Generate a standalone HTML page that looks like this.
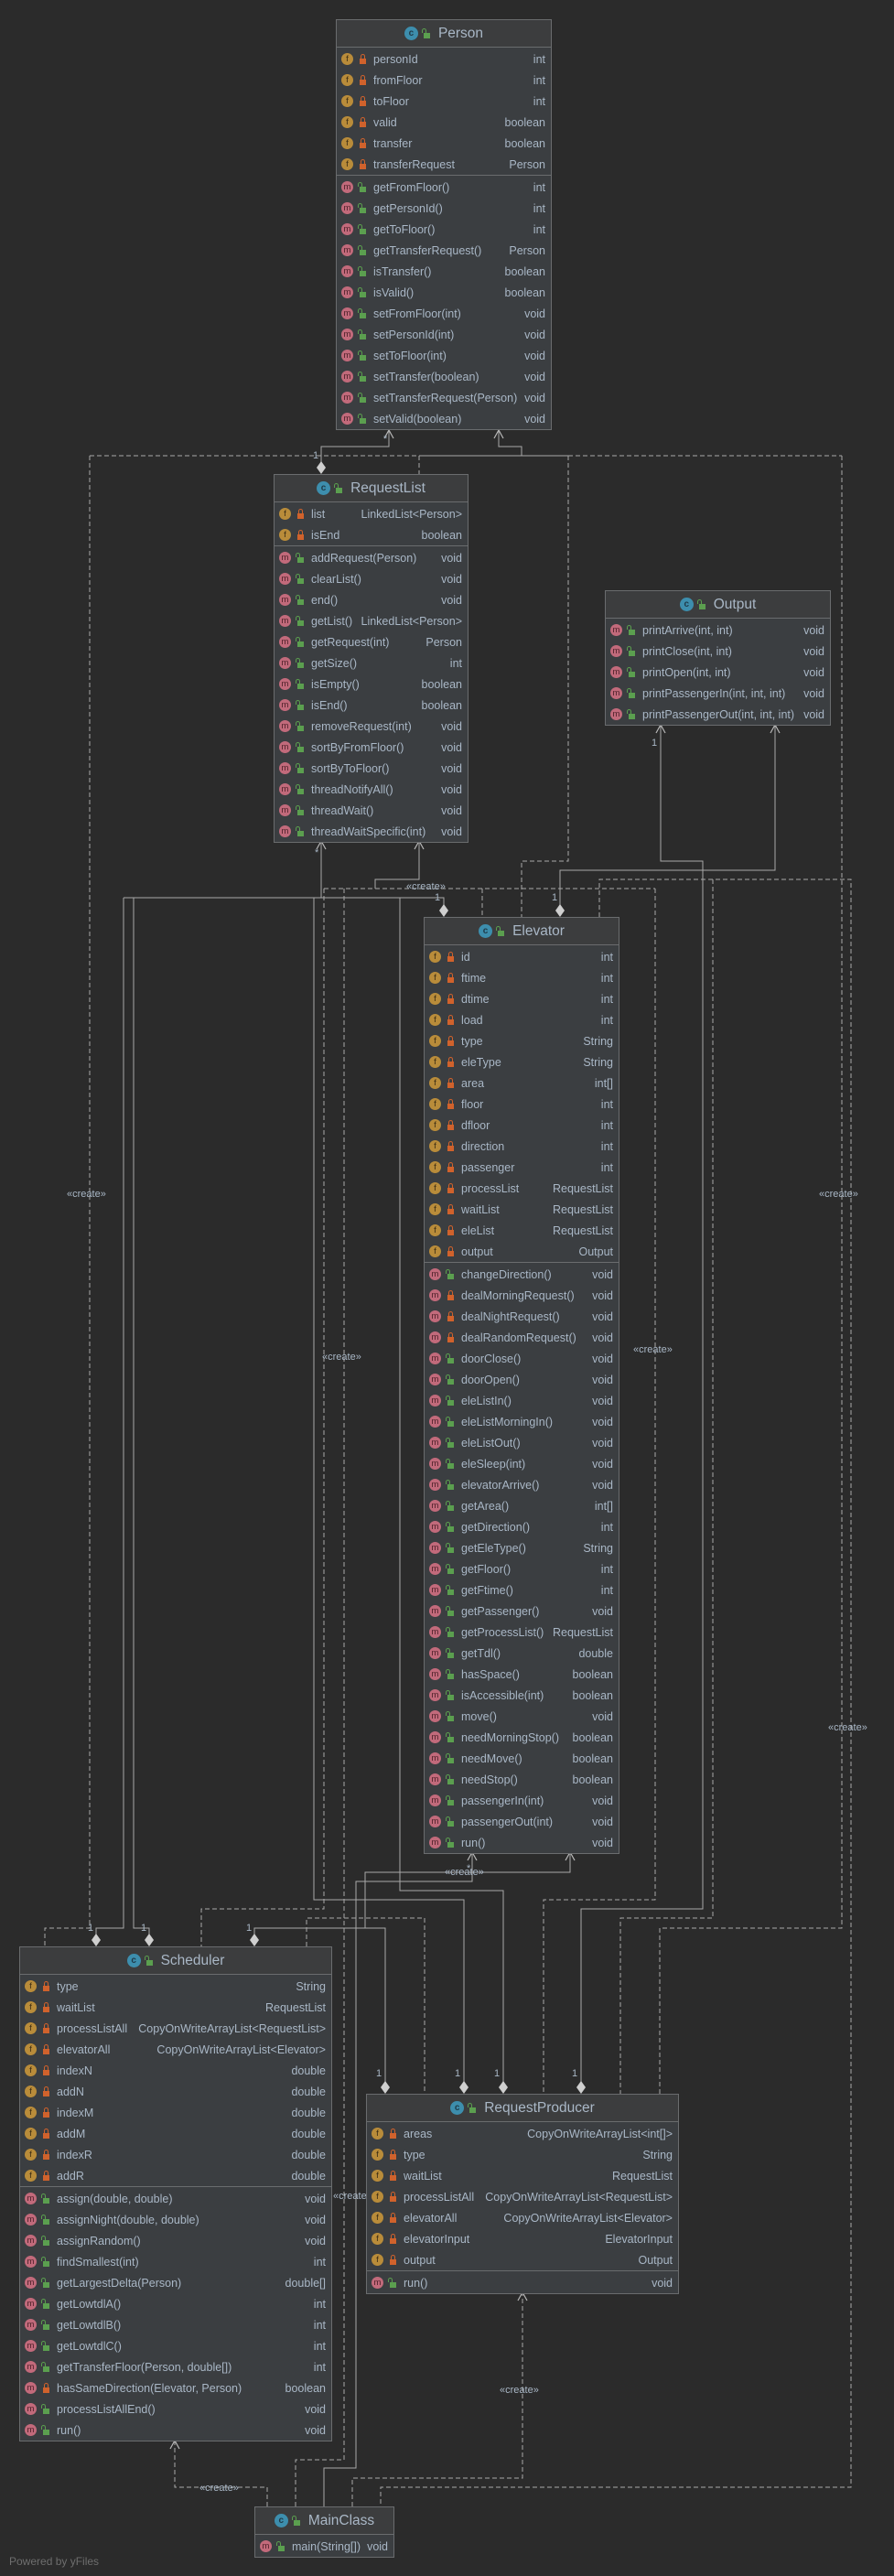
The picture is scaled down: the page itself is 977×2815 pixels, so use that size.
<!DOCTYPE html>
<html><head><meta charset="utf-8">
<style>
html,body{margin:0;padding:0;background:#2b2b2b;}
body{width:977px;height:2815px;position:relative;overflow:hidden;font-family:"Liberation Sans",sans-serif;}
svg.lines{position:absolute;left:0;top:0;}
.box{position:absolute;background:#3b3e41;border:1px solid #6a6c6e;box-sizing:border-box;font-size:12.5px;color:#a9b7c6;z-index:2;}
.hd{height:29px;border-bottom:1px solid #6a6c6e;display:flex;justify-content:center;align-items:center;font-size:15.5px;background:#3c3d3e;color:#a9b7c6;}
.hd .ci{width:15px;height:15px;border-radius:50%;background:#3d8ead;color:#1f3a48;font-size:10px;display:flex;align-items:center;justify-content:center;margin-right:6px;font-weight:bold;}
.sec{padding-top:1px;}
.sec.f{border-bottom:1px solid #6a6c6e;}
.r{height:23px;display:flex;align-items:center;padding-right:6px;white-space:nowrap;}
.ic{width:13px;height:13px;border-radius:50%;margin-left:5px;flex:none;display:flex;align-items:center;justify-content:center;font-size:9.5px;color:#3a2c14;}
.ic.fi{background:#b98c3a;}
.ic.mi{background:#c26a7b;color:#4a1e27;}
.lk{width:7px;height:6px;flex:none;margin-left:7px;margin-right:8px;position:relative;margin-top:4px;}
.lk::before{content:"";position:absolute;left:1px;top:-5px;width:3px;height:4px;border:1.5px solid;border-bottom:none;border-radius:3px 3px 0 0;}
.lk.p{background:#d0622c;}
.lk.p::before{border-color:#d0622c;}
.lk.g{background:#5b9f4f;}
.lk.g::before{border-color:#5b9f4f;left:-2px;}
.hd .lk{margin-left:0;margin-right:9px;margin-top:5px;}
.n{flex:1;}
.t{margin-left:6px;}
.lbl{position:absolute;font-size:11px;color:#a9b7c6;z-index:1;white-space:nowrap;}
.one{position:absolute;font-size:11px;color:#a9b7c6;}
</style></head><body>

<svg class="lines" width="977" height="2815" viewBox="0 0 977 2815">
<g fill="none" stroke="#a8a8a8" stroke-width="1">
<!-- solid lines -->
<polyline points="351,505 351,488 425,488 425,470"/>
<polyline points="545,470 545,488 570,488 570,498"/>
<line x1="458" y1="498" x2="621" y2="498"/>
<polyline points="351,919 351,981"/>
<polyline points="458,919 458,961 410,961 410,971"/>
<polyline points="135,981 485,981 485,989"/>
<polyline points="135,981 135,2107 105,2107 105,2114"/>
<polyline points="146,981 146,2107 163,2107 163,2114"/>
<polyline points="343,981 343,2076 507,2076 507,2275"/>
<polyline points="437,981 437,2066 550,2066 550,2275"/>
<polyline points="623,2024 623,2046 399,2046 399,2107"/>
<polyline points="278,2114 278,2107 421,2107 421,2275"/>
<polyline points="516,2024 516,2056 389,2056 389,2697 354,2697 354,2739"/>
<polyline points="722,792 722,941 768,941 768,2086 635,2086 635,2275"/>
<polyline points="847,792 847,951 612,951 612,989"/>
</g>
<g fill="none" stroke="#a8a8a8" stroke-width="1" stroke-dasharray="5,3">
<line x1="98" y1="498" x2="458" y2="498"/>
<line x1="621" y1="498" x2="920" y2="498"/>
<polyline points="98,498 98,2107 49,2107 49,2127"/>
<line x1="458" y1="498" x2="458" y2="518"/>
<polyline points="621,498 621,941 570,941 570,1002"/>
<polyline points="920,498 920,2107 721,2107 721,2288"/>
<line x1="354" y1="971" x2="716" y2="971"/>
<line x1="527" y1="971" x2="527" y2="1002"/>
<polyline points="354,971 354,2086 220,2086 220,2127"/>
<polyline points="376,971 376,2688 323,2688 323,2739"/>
<polyline points="716,971 716,2076 594,2076 594,2288"/>
<polyline points="655,1002 655,961 930,961 930,2718 416,2718 416,2739"/>
<polyline points="779,961 779,2096 678,2096 678,2288"/>
<polyline points="335,2127 335,2096 464,2096 464,2288"/>
<polyline points="292,2739 292,2718 191,2718 191,2667"/>
<polyline points="385,2739 385,2708 571,2708 571,2505"/>
</g>
<!-- arrowheads -->
<g fill="none" stroke="#b8b8b8" stroke-width="1.2">
<polyline points="420,479 425,470 430,479"/>
<polyline points="540,479 545,470 550,479"/>
<polyline points="346,928 351,919 356,928"/>
<polyline points="453,928 458,919 463,928"/>
<polyline points="717,801 722,792 727,801"/>
<polyline points="842,801 847,792 852,801"/>
<polyline points="511,2033 516,2024 521,2033"/>
<polyline points="618,2033 623,2024 628,2033"/>
<polyline points="186,2676 191,2667 196,2676"/>
<polyline points="566,2514 571,2505 576,2514"/>
</g>
<!-- diamonds -->
<g fill="#cfcfcf">
<polygon points="351,504 356,511 351,518 346,511"/>
<polygon points="485,988 490,995 485,1002 480,995"/>
<polygon points="612,988 617,995 612,1002 607,995"/>
<polygon points="105,2113 110,2120 105,2127 100,2120"/>
<polygon points="163,2113 168,2120 163,2127 158,2120"/>
<polygon points="278,2113 283,2120 278,2127 273,2120"/>
<polygon points="421,2274 426,2281 421,2288 416,2281"/>
<polygon points="507,2274 512,2281 507,2288 502,2281"/>
<polygon points="550,2274 555,2281 550,2288 545,2281"/>
<polygon points="635,2274 640,2281 635,2288 630,2281"/>
</g>
</svg>

<div class="one" style="left:342px;top:492px">1</div>
<div class="one" style="left:419px;top:474px">*</div>
<div class="one" style="left:344px;top:926px">*</div>
<div class="one" style="left:475px;top:975px">1</div>
<div class="one" style="left:603px;top:975px">1</div>
<div class="one" style="left:712px;top:806px">1</div>
<div class="one" style="left:96px;top:2101px">1</div>
<div class="one" style="left:154px;top:2101px">1</div>
<div class="one" style="left:269px;top:2101px">1</div>
<div class="one" style="left:411px;top:2260px">1</div>
<div class="one" style="left:497px;top:2260px">1</div>
<div class="one" style="left:540px;top:2260px">1</div>
<div class="one" style="left:625px;top:2260px">1</div>
<div class="one" style="left:510px;top:2036px">*</div>

<div class="lbl" style="left:73px;top:1299px">«create»</div>
<div class="lbl" style="left:444px;top:963px">«create»</div>
<div class="lbl" style="left:352px;top:1477px">«create»</div>
<div class="lbl" style="left:692px;top:1469px">«create»</div>
<div class="lbl" style="left:895px;top:1299px">«create»</div>
<div class="lbl" style="left:905px;top:1882px">«create»</div>
<div class="lbl" style="left:486px;top:2040px">«create»</div>
<div class="lbl" style="left:364px;top:2394px">«create»</div>
<div class="lbl" style="left:546px;top:2606px">«create»</div>
<div class="lbl" style="left:218px;top:2713px">«create»</div>

<!-- Person -->
<div class="box" style="left:367px;top:21px;width:236px;">
<div class="hd"><span class="ci">c</span><span class="lk g"></span>Person</div>
<div class="sec f">
<div class="r"><span class="ic fi">f</span><span class="lk p"></span><span class="n">personId</span><span class="t">int</span></div>
<div class="r"><span class="ic fi">f</span><span class="lk p"></span><span class="n">fromFloor</span><span class="t">int</span></div>
<div class="r"><span class="ic fi">f</span><span class="lk p"></span><span class="n">toFloor</span><span class="t">int</span></div>
<div class="r"><span class="ic fi">f</span><span class="lk p"></span><span class="n">valid</span><span class="t">boolean</span></div>
<div class="r"><span class="ic fi">f</span><span class="lk p"></span><span class="n">transfer</span><span class="t">boolean</span></div>
<div class="r"><span class="ic fi">f</span><span class="lk p"></span><span class="n">transferRequest</span><span class="t">Person</span></div>
</div>
<div class="sec">
<div class="r"><span class="ic mi">m</span><span class="lk g"></span><span class="n">getFromFloor()</span><span class="t">int</span></div>
<div class="r"><span class="ic mi">m</span><span class="lk g"></span><span class="n">getPersonId()</span><span class="t">int</span></div>
<div class="r"><span class="ic mi">m</span><span class="lk g"></span><span class="n">getToFloor()</span><span class="t">int</span></div>
<div class="r"><span class="ic mi">m</span><span class="lk g"></span><span class="n">getTransferRequest()</span><span class="t">Person</span></div>
<div class="r"><span class="ic mi">m</span><span class="lk g"></span><span class="n">isTransfer()</span><span class="t">boolean</span></div>
<div class="r"><span class="ic mi">m</span><span class="lk g"></span><span class="n">isValid()</span><span class="t">boolean</span></div>
<div class="r"><span class="ic mi">m</span><span class="lk g"></span><span class="n">setFromFloor(int)</span><span class="t">void</span></div>
<div class="r"><span class="ic mi">m</span><span class="lk g"></span><span class="n">setPersonId(int)</span><span class="t">void</span></div>
<div class="r"><span class="ic mi">m</span><span class="lk g"></span><span class="n">setToFloor(int)</span><span class="t">void</span></div>
<div class="r"><span class="ic mi">m</span><span class="lk g"></span><span class="n">setTransfer(boolean)</span><span class="t">void</span></div>
<div class="r"><span class="ic mi">m</span><span class="lk g"></span><span class="n">setTransferRequest(Person)</span><span class="t">void</span></div>
<div class="r"><span class="ic mi">m</span><span class="lk g"></span><span class="n">setValid(boolean)</span><span class="t">void</span></div>
</div>
</div>

<!-- RequestList -->
<div class="box" style="left:299px;top:518px;width:213px;">
<div class="hd"><span class="ci">c</span><span class="lk g"></span>RequestList</div>
<div class="sec f">
<div class="r"><span class="ic fi">f</span><span class="lk p"></span><span class="n">list</span><span class="t">LinkedList&lt;Person&gt;</span></div>
<div class="r"><span class="ic fi">f</span><span class="lk p"></span><span class="n">isEnd</span><span class="t">boolean</span></div>
</div>
<div class="sec">
<div class="r"><span class="ic mi">m</span><span class="lk g"></span><span class="n">addRequest(Person)</span><span class="t">void</span></div>
<div class="r"><span class="ic mi">m</span><span class="lk g"></span><span class="n">clearList()</span><span class="t">void</span></div>
<div class="r"><span class="ic mi">m</span><span class="lk g"></span><span class="n">end()</span><span class="t">void</span></div>
<div class="r"><span class="ic mi">m</span><span class="lk g"></span><span class="n">getList()</span><span class="t">LinkedList&lt;Person&gt;</span></div>
<div class="r"><span class="ic mi">m</span><span class="lk g"></span><span class="n">getRequest(int)</span><span class="t">Person</span></div>
<div class="r"><span class="ic mi">m</span><span class="lk g"></span><span class="n">getSize()</span><span class="t">int</span></div>
<div class="r"><span class="ic mi">m</span><span class="lk g"></span><span class="n">isEmpty()</span><span class="t">boolean</span></div>
<div class="r"><span class="ic mi">m</span><span class="lk g"></span><span class="n">isEnd()</span><span class="t">boolean</span></div>
<div class="r"><span class="ic mi">m</span><span class="lk g"></span><span class="n">removeRequest(int)</span><span class="t">void</span></div>
<div class="r"><span class="ic mi">m</span><span class="lk g"></span><span class="n">sortByFromFloor()</span><span class="t">void</span></div>
<div class="r"><span class="ic mi">m</span><span class="lk g"></span><span class="n">sortByToFloor()</span><span class="t">void</span></div>
<div class="r"><span class="ic mi">m</span><span class="lk g"></span><span class="n">threadNotifyAll()</span><span class="t">void</span></div>
<div class="r"><span class="ic mi">m</span><span class="lk g"></span><span class="n">threadWait()</span><span class="t">void</span></div>
<div class="r"><span class="ic mi">m</span><span class="lk g"></span><span class="n">threadWaitSpecific(int)</span><span class="t">void</span></div>
</div>
</div>

<!-- Output -->
<div class="box" style="left:661px;top:645px;width:247px;">
<div class="hd"><span class="ci">c</span><span class="lk g"></span>Output</div>
<div class="sec">
<div class="r"><span class="ic mi">m</span><span class="lk g"></span><span class="n">printArrive(int, int)</span><span class="t">void</span></div>
<div class="r"><span class="ic mi">m</span><span class="lk g"></span><span class="n">printClose(int, int)</span><span class="t">void</span></div>
<div class="r"><span class="ic mi">m</span><span class="lk g"></span><span class="n">printOpen(int, int)</span><span class="t">void</span></div>
<div class="r"><span class="ic mi">m</span><span class="lk g"></span><span class="n">printPassengerIn(int, int, int)</span><span class="t">void</span></div>
<div class="r"><span class="ic mi">m</span><span class="lk g"></span><span class="n">printPassengerOut(int, int, int)</span><span class="t">void</span></div>
</div>
</div>

<!-- Elevator -->
<div class="box" style="left:463px;top:1002px;width:214px;">
<div class="hd"><span class="ci">c</span><span class="lk g"></span>Elevator</div>
<div class="sec f">
<div class="r"><span class="ic fi">f</span><span class="lk p"></span><span class="n">id</span><span class="t">int</span></div>
<div class="r"><span class="ic fi">f</span><span class="lk p"></span><span class="n">ftime</span><span class="t">int</span></div>
<div class="r"><span class="ic fi">f</span><span class="lk p"></span><span class="n">dtime</span><span class="t">int</span></div>
<div class="r"><span class="ic fi">f</span><span class="lk p"></span><span class="n">load</span><span class="t">int</span></div>
<div class="r"><span class="ic fi">f</span><span class="lk p"></span><span class="n">type</span><span class="t">String</span></div>
<div class="r"><span class="ic fi">f</span><span class="lk p"></span><span class="n">eleType</span><span class="t">String</span></div>
<div class="r"><span class="ic fi">f</span><span class="lk p"></span><span class="n">area</span><span class="t">int[]</span></div>
<div class="r"><span class="ic fi">f</span><span class="lk p"></span><span class="n">floor</span><span class="t">int</span></div>
<div class="r"><span class="ic fi">f</span><span class="lk p"></span><span class="n">dfloor</span><span class="t">int</span></div>
<div class="r"><span class="ic fi">f</span><span class="lk p"></span><span class="n">direction</span><span class="t">int</span></div>
<div class="r"><span class="ic fi">f</span><span class="lk p"></span><span class="n">passenger</span><span class="t">int</span></div>
<div class="r"><span class="ic fi">f</span><span class="lk p"></span><span class="n">processList</span><span class="t">RequestList</span></div>
<div class="r"><span class="ic fi">f</span><span class="lk p"></span><span class="n">waitList</span><span class="t">RequestList</span></div>
<div class="r"><span class="ic fi">f</span><span class="lk p"></span><span class="n">eleList</span><span class="t">RequestList</span></div>
<div class="r"><span class="ic fi">f</span><span class="lk p"></span><span class="n">output</span><span class="t">Output</span></div>
</div>
<div class="sec">
<div class="r"><span class="ic mi">m</span><span class="lk g"></span><span class="n">changeDirection()</span><span class="t">void</span></div>
<div class="r"><span class="ic mi">m</span><span class="lk p"></span><span class="n">dealMorningRequest()</span><span class="t">void</span></div>
<div class="r"><span class="ic mi">m</span><span class="lk p"></span><span class="n">dealNightRequest()</span><span class="t">void</span></div>
<div class="r"><span class="ic mi">m</span><span class="lk p"></span><span class="n">dealRandomRequest()</span><span class="t">void</span></div>
<div class="r"><span class="ic mi">m</span><span class="lk g"></span><span class="n">doorClose()</span><span class="t">void</span></div>
<div class="r"><span class="ic mi">m</span><span class="lk g"></span><span class="n">doorOpen()</span><span class="t">void</span></div>
<div class="r"><span class="ic mi">m</span><span class="lk g"></span><span class="n">eleListIn()</span><span class="t">void</span></div>
<div class="r"><span class="ic mi">m</span><span class="lk g"></span><span class="n">eleListMorningIn()</span><span class="t">void</span></div>
<div class="r"><span class="ic mi">m</span><span class="lk g"></span><span class="n">eleListOut()</span><span class="t">void</span></div>
<div class="r"><span class="ic mi">m</span><span class="lk g"></span><span class="n">eleSleep(int)</span><span class="t">void</span></div>
<div class="r"><span class="ic mi">m</span><span class="lk g"></span><span class="n">elevatorArrive()</span><span class="t">void</span></div>
<div class="r"><span class="ic mi">m</span><span class="lk g"></span><span class="n">getArea()</span><span class="t">int[]</span></div>
<div class="r"><span class="ic mi">m</span><span class="lk g"></span><span class="n">getDirection()</span><span class="t">int</span></div>
<div class="r"><span class="ic mi">m</span><span class="lk g"></span><span class="n">getEleType()</span><span class="t">String</span></div>
<div class="r"><span class="ic mi">m</span><span class="lk g"></span><span class="n">getFloor()</span><span class="t">int</span></div>
<div class="r"><span class="ic mi">m</span><span class="lk g"></span><span class="n">getFtime()</span><span class="t">int</span></div>
<div class="r"><span class="ic mi">m</span><span class="lk g"></span><span class="n">getPassenger()</span><span class="t">void</span></div>
<div class="r"><span class="ic mi">m</span><span class="lk g"></span><span class="n">getProcessList()</span><span class="t">RequestList</span></div>
<div class="r"><span class="ic mi">m</span><span class="lk g"></span><span class="n">getTdl()</span><span class="t">double</span></div>
<div class="r"><span class="ic mi">m</span><span class="lk g"></span><span class="n">hasSpace()</span><span class="t">boolean</span></div>
<div class="r"><span class="ic mi">m</span><span class="lk g"></span><span class="n">isAccessible(int)</span><span class="t">boolean</span></div>
<div class="r"><span class="ic mi">m</span><span class="lk g"></span><span class="n">move()</span><span class="t">void</span></div>
<div class="r"><span class="ic mi">m</span><span class="lk g"></span><span class="n">needMorningStop()</span><span class="t">boolean</span></div>
<div class="r"><span class="ic mi">m</span><span class="lk g"></span><span class="n">needMove()</span><span class="t">boolean</span></div>
<div class="r"><span class="ic mi">m</span><span class="lk g"></span><span class="n">needStop()</span><span class="t">boolean</span></div>
<div class="r"><span class="ic mi">m</span><span class="lk g"></span><span class="n">passengerIn(int)</span><span class="t">void</span></div>
<div class="r"><span class="ic mi">m</span><span class="lk g"></span><span class="n">passengerOut(int)</span><span class="t">void</span></div>
<div class="r"><span class="ic mi">m</span><span class="lk g"></span><span class="n">run()</span><span class="t">void</span></div>
</div>
</div>

<!-- Scheduler -->
<div class="box" style="left:21px;top:2127px;width:342px;">
<div class="hd"><span class="ci">c</span><span class="lk g"></span>Scheduler</div>
<div class="sec f">
<div class="r"><span class="ic fi">f</span><span class="lk p"></span><span class="n">type</span><span class="t">String</span></div>
<div class="r"><span class="ic fi">f</span><span class="lk p"></span><span class="n">waitList</span><span class="t">RequestList</span></div>
<div class="r"><span class="ic fi">f</span><span class="lk p"></span><span class="n">processListAll</span><span class="t">CopyOnWriteArrayList&lt;RequestList&gt;</span></div>
<div class="r"><span class="ic fi">f</span><span class="lk p"></span><span class="n">elevatorAll</span><span class="t">CopyOnWriteArrayList&lt;Elevator&gt;</span></div>
<div class="r"><span class="ic fi">f</span><span class="lk p"></span><span class="n">indexN</span><span class="t">double</span></div>
<div class="r"><span class="ic fi">f</span><span class="lk p"></span><span class="n">addN</span><span class="t">double</span></div>
<div class="r"><span class="ic fi">f</span><span class="lk p"></span><span class="n">indexM</span><span class="t">double</span></div>
<div class="r"><span class="ic fi">f</span><span class="lk p"></span><span class="n">addM</span><span class="t">double</span></div>
<div class="r"><span class="ic fi">f</span><span class="lk p"></span><span class="n">indexR</span><span class="t">double</span></div>
<div class="r"><span class="ic fi">f</span><span class="lk p"></span><span class="n">addR</span><span class="t">double</span></div>
</div>
<div class="sec">
<div class="r"><span class="ic mi">m</span><span class="lk g"></span><span class="n">assign(double, double)</span><span class="t">void</span></div>
<div class="r"><span class="ic mi">m</span><span class="lk g"></span><span class="n">assignNight(double, double)</span><span class="t">void</span></div>
<div class="r"><span class="ic mi">m</span><span class="lk g"></span><span class="n">assignRandom()</span><span class="t">void</span></div>
<div class="r"><span class="ic mi">m</span><span class="lk g"></span><span class="n">findSmallest(int)</span><span class="t">int</span></div>
<div class="r"><span class="ic mi">m</span><span class="lk g"></span><span class="n">getLargestDelta(Person)</span><span class="t">double[]</span></div>
<div class="r"><span class="ic mi">m</span><span class="lk g"></span><span class="n">getLowtdlA()</span><span class="t">int</span></div>
<div class="r"><span class="ic mi">m</span><span class="lk g"></span><span class="n">getLowtdlB()</span><span class="t">int</span></div>
<div class="r"><span class="ic mi">m</span><span class="lk g"></span><span class="n">getLowtdlC()</span><span class="t">int</span></div>
<div class="r"><span class="ic mi">m</span><span class="lk g"></span><span class="n">getTransferFloor(Person, double[])</span><span class="t">int</span></div>
<div class="r"><span class="ic mi">m</span><span class="lk p"></span><span class="n">hasSameDirection(Elevator, Person)</span><span class="t">boolean</span></div>
<div class="r"><span class="ic mi">m</span><span class="lk g"></span><span class="n">processListAllEnd()</span><span class="t">void</span></div>
<div class="r"><span class="ic mi">m</span><span class="lk g"></span><span class="n">run()</span><span class="t">void</span></div>
</div>
</div>

<!-- RequestProducer -->
<div class="box" style="left:400px;top:2288px;width:342px;">
<div class="hd"><span class="ci">c</span><span class="lk g"></span>RequestProducer</div>
<div class="sec f">
<div class="r"><span class="ic fi">f</span><span class="lk p"></span><span class="n">areas</span><span class="t">CopyOnWriteArrayList&lt;int[]&gt;</span></div>
<div class="r"><span class="ic fi">f</span><span class="lk p"></span><span class="n">type</span><span class="t">String</span></div>
<div class="r"><span class="ic fi">f</span><span class="lk p"></span><span class="n">waitList</span><span class="t">RequestList</span></div>
<div class="r"><span class="ic fi">f</span><span class="lk p"></span><span class="n">processListAll</span><span class="t">CopyOnWriteArrayList&lt;RequestList&gt;</span></div>
<div class="r"><span class="ic fi">f</span><span class="lk p"></span><span class="n">elevatorAll</span><span class="t">CopyOnWriteArrayList&lt;Elevator&gt;</span></div>
<div class="r"><span class="ic fi">f</span><span class="lk p"></span><span class="n">elevatorInput</span><span class="t">ElevatorInput</span></div>
<div class="r"><span class="ic fi">f</span><span class="lk p"></span><span class="n">output</span><span class="t">Output</span></div>
</div>
<div class="sec">
<div class="r"><span class="ic mi">m</span><span class="lk g"></span><span class="n">run()</span><span class="t">void</span></div>
</div>
</div>

<!-- MainClass -->
<div class="box" style="left:278px;top:2739px;width:153px;">
<div class="hd"><span class="ci">c</span><span class="lk g"></span>MainClass</div>
<div class="sec">
<div class="r"><span class="ic mi">m</span><span class="lk g"></span><span class="n">main(String[])</span><span class="t">void</span></div>
</div>
</div>

<div style="position:absolute;left:10px;top:2792px;font-size:12px;color:#6e6e6e;">Powered by yFiles</div>
</body></html>
